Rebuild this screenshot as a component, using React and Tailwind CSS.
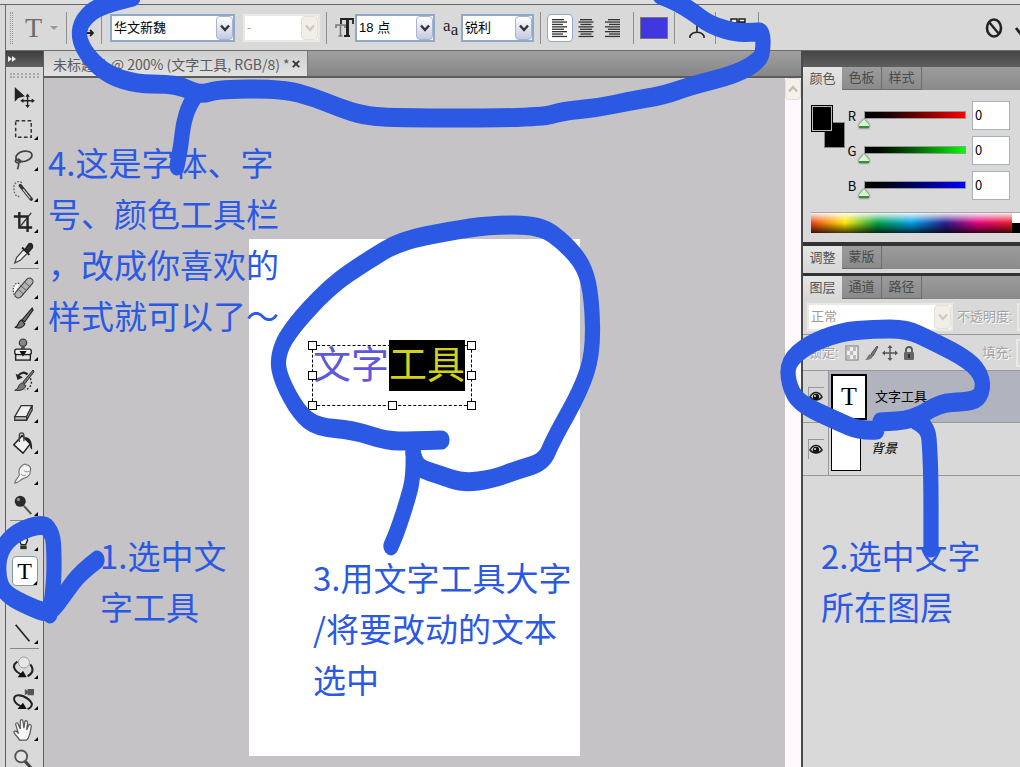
import { useState } from "react";

// toolbox drawings, all on a 24 x 24 grid
const toolIcons = {
  move: (
    <>
      <path d="M3 0v16l4-4 7-2z" fill="#222" />
      <path d="M17 9v12M11 15h12" stroke="#222" strokeWidth="1.5" />
      <path d="M17 7l-2.500 3.500h5zM17 23l-2.500-3.500h5zM9 15l3.500-2.500v5zM25 15l-3.500-2.500v5z" fill="#222" />
    </>
  ),
  marquee: <rect x="4" y="3" width="17" height="18" fill="none" stroke="#333" strokeWidth="1.6" strokeDasharray="4 2.5" />,
  lasso: (
    <>
      <ellipse cx="13" cy="8" rx="9" ry="5.500" fill="none" stroke="#444" strokeWidth="1.9" transform="rotate(-14 13 8)" />
      <path d="M5 11c-3 2 0 5 3 4s1-4-2-4M7 15c1 2 0 4-1 7" fill="none" stroke="#444" strokeWidth="1.8" />
    </>
  ),
  wand: (
    <>
      <path d="M11 3c-5-3-9 0-9 5s1 10 6 10" fill="none" stroke="#666" strokeWidth="1.4" strokeDasharray="2 1.5" />
      <path d="M9 6l12 15" stroke="#333" strokeWidth="3.8" strokeLinecap="round" />
      <path d="M12 10l8 10" stroke="#ddd" strokeWidth="1.2" />
    </>
  ),
  crop: (
    <>
      <path d="M8 1v17h14M2 6h15v17" fill="none" stroke="#222" strokeWidth="2.6" />
      <path d="M8 18L21 2" stroke="#333" strokeWidth="1.4" />
    </>
  ),
  eyedropper: (
    <>
      <path d="M3 23l2-6 8-9 4 4-8 8z" fill="#eee" stroke="#444" strokeWidth="1.4" />
      <path d="M11 6l8 8M14 9l4-6c2-3 5 0 4 3l-5 6z" stroke="#222" strokeWidth="2" fill="#333" />
    </>
  ),
  heal: (
    <>
      <path d="M8 7c-7-1-8 7-5 14" fill="#fff" stroke="#444" strokeWidth="1.4" strokeDasharray="1.500 1.500" />
      <path d="M7 19L19 5" stroke="#444" strokeWidth="9" strokeLinecap="round" />
      <path d="M7 19L19 5" stroke="#b4b4b4" strokeWidth="6.500" strokeLinecap="round" />
      <path d="M6 13l7 6M9 9l7 6M13 5l7 6" stroke="#555" strokeWidth="1" />
    </>
  ),
  brush: (
    <>
      <path d="M11 13L22 0l1 2-9 13z" fill="#777" stroke="#222" strokeWidth="1.3" />
      <path d="M3 21c4 0 3-6 7-8l4 4c-1 4-6 6-11 4z" fill="#777" stroke="#222" strokeWidth="1.3" />
    </>
  ),
  stamp: (
    <>
      <circle cx="12" cy="4" r="4" fill="#888" stroke="#333" strokeWidth="1.3" />
      <path d="M10 8h4v4h-4z" fill="#555" />
      <rect x="3" y="11" width="18" height="6" rx="2" fill="#eee" stroke="#222" strokeWidth="1.5" />
      <rect x="4" y="17" width="16" height="6" fill="#e2e2e2" stroke="#222" strokeWidth="1.5" />
      <path d="M8 13h8l-4 6z" fill="#111" />
    </>
  ),
  history: (
    <>
      <path d="M12 13L23 0l1 2-10 13z" fill="#777" stroke="#222" />
      <path d="M3 22c4 0 3-6 8-8l4 3c-1 5-7 6-12 5z" fill="#777" stroke="#222" />
      <path d="M7 6c3-4 7-4 10-1" fill="none" stroke="#222" strokeWidth="2.2" />
      <path d="M4 4l2 7 6-3z" fill="#222" />
      <path d="M20 9c3 6 0 11-6 13" fill="none" stroke="#222" strokeWidth="1.6" strokeDasharray="2 2" />
    </>
  ),
  eraser: (
    <>
      <path d="M3 17L10 5h12l-6 12z" fill="#eee" stroke="#333" strokeWidth="1.4" />
      <path d="M3 17h13v4H3zM16 17l6-12v5l-6 11z" fill="#bbb" stroke="#333" strokeWidth="1.4" />
    </>
  ),
  bucket: (
    <>
      <path d="M2 14l9-10 9 9-8 10z" fill="#f2f2f2" stroke="#222" strokeWidth="1.6" />
      <path d="M13 6c6-1 9 3 9 13-3-1-2-7-5-9z" fill="#222" />
      <path d="M8 11V4c0-4 5-4 5 0v6" fill="none" stroke="#444" strokeWidth="1.5" />
    </>
  ),
  smudge: (
    <>
      <path
        d="M3 22c0-3 4-6 5-9-1-4 0-8 3-10 2-2 4-2 5-1 4 0 5 4 4 7 0 5-4 7-8 8-3 1-5 5-9 5z"
        fill="#f4f4f4"
        stroke="#777"
        strokeWidth="1.3"
      />
      <path d="M10 12c1 2 3 2 5 1M13 8c1 2 3 2 6 1" fill="none" stroke="#888" />
    </>
  ),
  dodge: (
    <>
      <path d="M13 13l8 9" stroke="#555" strokeWidth="2.2" />
      <circle cx="9" cy="8" r="6" fill="#2a2a2a" />
      <circle cx="7" cy="6" r="1.800" fill="#888" />
    </>
  ),
  pen: (
    <>
      <path d="M12 1l-4 11 2 5h5l2-5z" fill="#eee" stroke="#222" strokeWidth="1.5" />
      <path d="M12 3v9" stroke="#222" strokeWidth="1.2" />
      <path d="M9 18h7v4H9z" fill="#333" />
    </>
  ),
  path: <path d="M8 2v17l4-4 6 0z" fill="#222" />,
  line: <path d="M4 3l15 18" stroke="#222" strokeWidth="1.8" />,
  rotate3d: (
    <>
      <path d="M6 5C-1 9 2 16 12 20M20 8c4 5 3 10-3 13" fill="none" stroke="#222" strokeWidth="2.2" />
      <path d="M6 22l10 0-4-7z" fill="#111" />
      <circle cx="13" cy="6" r="6" fill="#e6e6e6" stroke="#999" />
    </>
  ),
  orbit3d: (
    <>
      <path d="M13 21C1 18-1 8 7 8c7 0 17 7 14 12-1 2-2 2-4 3" fill="none" stroke="#222" strokeWidth="2.2" />
      <path d="M6 23l10 0-4-7z" fill="#111" />
      <path d="M14 1l3 2V1h7v7h-7V6l-3 2z" fill="#555" />
    </>
  ),
  hand: (
    <path
      d="M8 23c-1-4-7-7-6-9 2-2 4 0 5 2L4 6c0-2 2-3 3 0l2 5V3c0-3 3-3 3 0l1 7 1-7c1-2 3-1 3 1l-1 8 2-5c1-2 3-1 3 1-1 5-1 11-5 15z"
      fill="#f8f8f8"
      stroke="#555"
      strokeWidth="1.3"
    />
  ),
  zoom: (
    <>
      <path d="M14 12l8 9" stroke="#444" strokeWidth="3.4" />
      <circle cx="10" cy="7" r="6.500" fill="#e4e4e4" stroke="#555" strokeWidth="2" />
    </>
  ),
};

const toolGroups = [
  ["move", "marquee", "lasso", "wand", "crop", "eyedropper"],
  ["heal", "brush", "stamp", "history", "eraser", "bucket", "smudge", "dodge"],
  ["pen", "text", "path", "line"],
  ["rotate3d", "orbit3d", "hand", "zoom"],
];

// freehand marker strokes
const strokes = [
  [[133, -3], [100, 5], [82, 20], [78, 37], [88, 57], [108, 75], [137, 84], [167, 84], [184, 87], [200, 95], [220, 89], [283, 89], [313, 97], [340, 108], [362, 115], [390, 118], [540, 118], [563, 111], [597, 108], [630, 101], [665, 95], [690, 86], [737, 74], [760, 60], [763, 50], [763, 32], [755, 32], [737, 33], [710, 25], [693, 12], [677, 2], [660, -5]],
  [[197, 93], [189, 105], [183, 125], [181, 145], [177, 166]],
  [[877, 430], [860, 431], [837, 421], [798, 403], [788, 382], [788, 362], [807, 345], [840, 332], [873, 329], [907, 329], [930, 340], [960, 355], [977, 368], [984, 384], [979, 399], [963, 402], [940, 403], [913, 420], [880, 422]],
  [[915, 420], [928, 426], [930, 452], [931, 485], [931, 548]],
  [[97, 560], [80, 573], [66, 592], [50, 614], [30, 607], [5, 594], [-2, 577], [0, 550], [16, 532], [44, 523], [53, 535], [54, 553], [54, 580], [50, 614]],
  [[442, 440], [410, 441], [387, 441], [353, 430], [317, 427], [299, 413], [281, 380], [277, 358], [288, 332], [330, 286], [367, 261], [400, 241], [450, 231], [490, 225], [540, 225], [565, 243], [585, 267], [592, 300], [593, 353], [581, 390], [553, 440], [544, 462], [517, 470], [493, 479], [463, 483], [440, 475], [418, 468], [413, 453]],
  [[413, 445], [414, 475], [407, 502], [397, 532], [391, 546]],
];

// the marker tip is an upright oval, so x is drawn in a squeezed space
const TIP = 0.8;

// smooth curve through the midpoints
function strokePath(points) {
  const pts = points.map(([x, y]) => [x / TIP, y]);
  let d = `M${pts[0][0]} ${pts[0][1]}`;
  for (let i = 1; i < pts.length - 1; i++) {
    const [x, y] = pts[i];
    const [nx, ny] = pts[i + 1];
    d += `Q${x} ${y} ${(x + nx) / 2} ${(y + ny) / 2}`;
  }
  const last = pts[pts.length - 1];
  return `${d}L${last[0]} ${last[1]}`;
}

const notes = [
  { className: "left-[48px] top-[137px]", lines: ["4.这是字体、字", "号、颜色工具栏", "，改成你喜欢的", "样式就可以了～"] },
  { className: "left-[100px] top-[530px]", lines: ["1.选中文", "字工具"] },
  { className: "left-[313px] top-[552px]", lines: ["3.用文字工具大字", "/将要改动的文本", "选中"] },
  { className: "left-[821px] top-[530px]", lines: ["2.选中文字", "所在图层"] },
];

function Chevron({ className }) {
  return (
    <svg viewBox="0 0 12 12" className={className}>
      <path d="M2 3.500l4 4.500 4-4.500" fill="none" stroke="currentColor" strokeWidth="2.4" />
    </svg>
  );
}

function Dropdown({ label, value, className, disabled }) {
  return (
    <div
      className={`relative flex h-7 shrink-0 items-center border-2 bg-white ${
        disabled ? "border-[#ebe9e1] text-[#a39d8c]" : "border-[#8faac8] text-black"
      } ${className}`}
    >
      <select aria-label={label} disabled={disabled} className="h-full w-full appearance-none truncate bg-transparent pl-0.5 pr-5 text-[13px] leading-5 opacity-100 outline-none">
        <option>{value}</option>
      </select>
      <span
        className={`pointer-events-none absolute inset-y-0 right-0 flex w-[17px] items-center justify-center rounded-sm border ${
          disabled ? "border-[#e4e1d6] bg-[#f1efe8] text-[#cfccbf]" : "border-[#a9b3cf] bg-gradient-to-b from-white to-[#c5c9df] text-[#333]"
        }`}
      >
        <Chevron className="size-3" />
      </span>
    </div>
  );
}

function Divider({ className }) {
  return <span className={`h-8 w-px shrink-0 bg-[#8e8e8e] ${className}`} />;
}

function AlignIcon({ align }) {
  const widths = [12, 15, 11, 15, 12, 15, 11, 15];
  return (
    <svg viewBox="0 0 16 20" className="h-5 w-4">
      {widths.map((w, i) => {
        const x = align === "left" ? 0 : align === "right" ? 16 - w : (16 - w) / 2;
        return <rect key={i} x={x} y={1 + i * 2.4} width={w} height="1.3" fill="#333" />;
      })}
    </svg>
  );
}

function OptionsBar() {
  return (
    <header className="flex h-[51px] shrink-0 flex-col bg-[#d9d9d9]">
      <div className="h-[5px] shrink-0 border-b border-[#666] bg-[#dedede]" />
      <div className="ml-[5px] flex flex-1 items-center border-b border-l border-[#6c6c6c] pl-1">
        <span className="h-8 w-[3px] shrink-0 border-x border-dotted border-[#999]" />
        <button aria-label="文字工具预设" className="ml-3 flex shrink-0 items-center gap-2 font-['Liberation_Serif'] text-[28px] leading-8 text-[#6d6d6d]">
          T
          <span className="border-x-4 border-t-4 border-x-transparent border-t-[#999]" />
        </button>
        <Divider className="ml-2" />
        <button aria-label="更改文本方向" className="ml-2 shrink-0">
          <svg viewBox="0 0 20 20" className="size-5">
            <path d="M2 13L7 3l5 10M4 10h6" fill="none" stroke="#222" strokeWidth="1.8" />
            <path d="M10 15h7m-2-3l3 3-3 3" fill="none" stroke="#222" strokeWidth="1.8" />
          </svg>
        </button>
        <Divider className="ml-1.5" />
        <Dropdown label="字体" value="华文新魏" className="ml-2 w-[125px]" />
        <Dropdown label="字体样式" value="-" className="ml-2 w-[77px]" disabled />
        <Divider className="ml-1.5" />
        <svg viewBox="0 0 20 24" className="ml-2 h-6 w-5 shrink-0">
          <path d="M1 12V9h9v3M5.500 9v11M3.500 20h4" fill="none" stroke="#777" strokeWidth="1.6" />
          <path d="M6 8V3h12v5M12 3v17M9 20h6" fill="none" stroke="#222" strokeWidth="1.8" />
          <path d="M11 3h3v17h-3z" fill="#222" />
        </svg>
        <Dropdown label="字号" value="18 点" className="w-[80px]" />
        <span className="ml-2 flex w-4 shrink-0 items-center font-['Liberation_Serif'] text-[17px] leading-5 text-[#222]">
          <span className="pb-1">a</span>
          <span className="pt-1">a</span>
        </span>
        <Dropdown label="消除锯齿" value="锐利" className="ml-0.5 w-[73px]" />
        <Divider className="ml-1.5" />
        <div className="ml-1.5 flex shrink-0 items-center">
          <button aria-label="左对齐" className="flex h-7 w-[26px] items-center justify-center rounded border border-[#8faac8] bg-white">
            <AlignIcon align="left" />
          </button>
          <button aria-label="居中对齐" className="flex h-7 w-[26px] items-center justify-center">
            <AlignIcon align="center" />
          </button>
          <button aria-label="右对齐" className="flex h-7 w-[26px] items-center justify-center">
            <AlignIcon align="right" />
          </button>
        </div>
        <Divider className="ml-2" />
        <button aria-label="文本颜色" className="ml-1.5 h-[22px] w-7 shrink-0 border border-[#777] bg-[#4137e0]" />
        <Divider className="ml-1.5" />
        <button aria-label="变形文字" className="ml-3.5 shrink-0">
          <svg viewBox="0 0 16 24" className="h-6 w-4">
            <path d="M4 3h8M8 3v13M1 22v-2c3-5 11-5 14 0v2" fill="none" stroke="#222" strokeWidth="1.6" />
          </svg>
        </button>
        <Divider className="ml-2.5" />
        <button aria-label="字符面板" className="ml-3.5 shrink-0">
          <svg viewBox="0 0 16 20" className="h-5 w-4">
            <path d="M1 17V1h6v3h8v13zM1 5h14M9 4V1h6v3" fill="#eee" stroke="#222" strokeWidth="1.5" />
          </svg>
        </button>
        <Divider className="ml-3" />
        <button aria-label="取消" className="ml-auto shrink-0">
          <svg viewBox="0 0 20 24" className="h-6 w-5">
            <ellipse cx="10" cy="12" rx="7" ry="8.500" fill="#ddd" stroke="#222" strokeWidth="2.6" />
            <path d="M5 6l10 12" stroke="#222" strokeWidth="2.4" />
          </svg>
        </button>
        <button aria-label="提交" className="ml-2.5 w-1.5 shrink-0 overflow-hidden">
          <svg viewBox="0 0 16 20" className="h-5 w-4">
            <path d="M2 10l4 5 9-12" fill="none" stroke="#222" strokeWidth="2.800" />
          </svg>
        </button>
      </div>
    </header>
  );
}

function Toolbox() {
  return (
    <nav className="ml-[5px] flex w-[39px] shrink-0 flex-col border-x border-[#5e5e5e] bg-[#d9d9d9]">
      <div className="flex h-4 shrink-0 items-center bg-gradient-to-b from-[#3e3e3e] to-[#606060] pl-0.5">
        <svg viewBox="0 0 8 6" className="h-1.5 w-2">
          <path d="M0 0l4 3-4 3zM4 0l4 3-4 3z" fill="#eee" />
        </svg>
      </div>
      <div className="mx-1 mb-1 mt-[6px] h-[5px] shrink-0 border-y-2 border-dotted border-[#aaa]" />
      {toolGroups.map((group, g) => (
        <div key={g} className="shrink-0">
          {g > 0 && <div className="mx-1 h-1 border-t border-[#888]" />}
          {group.map((tool) => (
            <button key={tool} aria-label={tool} className="flex h-[31px] w-full items-center justify-center">
              {tool === "text" ? (
                <span className="relative flex h-[30px] w-[26px] items-center justify-center rounded border border-[#8399ad] bg-white font-['Liberation_Serif'] text-[24px] leading-none text-black">
                  T
                  <span className="absolute bottom-0 right-0 border-b-4 border-l-4 border-b-black border-l-transparent" />
                </span>
              ) : (
                <span className="relative flex h-full w-[26px] items-center">
                  <svg viewBox="0 0 24 24" className="h-[22px] w-[22px] overflow-visible">
                    {toolIcons[tool]}
                  </svg>
                  {tool !== "move" && tool !== "zoom" && (
                    <span className="absolute bottom-1 right-0 border-b-4 border-l-4 border-b-black border-l-transparent" />
                  )}
                </span>
              )}
            </button>
          ))}
        </div>
      ))}
    </nav>
  );
}

function Handle({ className }) {
  return <span className={`absolute size-[9px] border border-black bg-white ${className}`} />;
}

function DocumentArea() {
  return (
    <main className="flex min-w-0 flex-1 flex-col">
      <div className="flex h-[27px] shrink-0 border-b-2 border-[#5c5c5c] bg-gradient-to-b from-[#a0a0a0] to-[#868686]">
        <div className="flex w-[264px] items-center justify-between whitespace-nowrap border-r border-[#777] bg-gradient-to-b from-[#cfcfcf] to-[#e2e2e2] pl-[9px] pr-[7px] font-['Noto_Sans_CJK_SC',sans-serif] text-[14px] leading-5 text-[#5a5a5a]">
          <span>未标题-1 @ 200% (文字工具, RGB/8) *</span>
          <button aria-label="关闭">
            <svg viewBox="0 0 10 10" className="size-2">
              <path d="M1 1l8 8M9 1L1 9" stroke="#333" strokeWidth="2.2" />
            </svg>
          </button>
        </div>
      </div>
      <div className="flex min-h-0 flex-1">
        <div className="flex flex-1 items-end justify-center bg-[#c5c3c6] pb-[11px]">
          <div className="h-[517px] w-[331px] bg-white pl-[63px] pt-[106px]">
            <div className="relative h-[61px] w-[160px] border border-dashed border-black">
              <div className="-mt-[6px] flex whitespace-nowrap text-[38px] leading-[51px]">
                <span className="text-[#5f57dc]">文字</span>
                <span className="bg-black text-[#d2d21e]">工具</span>
              </div>
              <Handle className="-left-[5px] -top-[5px]" />
              <Handle className="-right-[5px] -top-[5px]" />
              <Handle className="-left-[5px] top-[25px]" />
              <Handle className="-right-[5px] top-[25px]" />
              <Handle className="-bottom-[5px] -left-[5px]" />
              <Handle className="-bottom-[5px] left-[75px]" />
              <Handle className="-bottom-[5px] -right-[5px]" />
            </div>
          </div>
        </div>
        <div className="w-4 shrink-0 bg-[#fdf9fd]">
          <button aria-label="向上滚动" className="flex h-[22px] w-full items-center justify-center rounded-sm border border-[#e2dfd3] bg-[#f3f1ea] text-[#c4c1b4]">
            <Chevron className="size-3 rotate-180" />
          </button>
        </div>
      </div>
    </main>
  );
}

function PanelTabs({ tabs }) {
  return (
    <div className="flex h-[23px] shrink-0 bg-gradient-to-b from-[#9c9c9c] to-[#8a8a8a] text-[13px] leading-[22px]">
      {tabs.map((tab, i) => (
        <button
          key={tab}
          className={i === 0 ? "w-[39px] bg-gradient-to-b from-[#e6e6e6] to-[#d8d8d8] text-[#555]" : "w-10 border-b border-r border-[#6d6d6d] text-[#4a4a4a]"}
        >
          {tab}
        </button>
      ))}
    </div>
  );
}

const channels = [
  { name: "R", bar: "bg-gradient-to-r from-black to-[#f00]" },
  { name: "G", bar: "bg-gradient-to-r from-black to-[#0f0]" },
  { name: "B", bar: "bg-gradient-to-r from-black to-[#00f]" },
];

function ColorPanel() {
  const [rgb, setRgb] = useState({ R: 0, G: 0, B: 0 });

  const handleChange = (name, value) => {
    setRgb({ ...rgb, [name]: Math.min(255, Number(value) || 0) });
  };

  return (
    <section>
      <PanelTabs tabs={["颜色", "色板", "样式"]} />
      <div className="flex flex-col pl-2 pt-[11px]">
        <div className="flex">
          <div className="relative mt-1 h-[43px] w-[34px] shrink-0">
            <span className="absolute bottom-0 right-0 h-[26px] w-[21px] border border-[#888] bg-black" />
            <span className="absolute left-0 top-0 h-[27px] w-[22px] border border-black bg-black ring-1 ring-inset ring-[#bbb]" />
          </div>
          <div className="flex flex-1 flex-col gap-[6px] pr-2.5">
            {channels.map(({ name, bar }) => (
              <div key={name} className="flex h-[29px] items-center">
                <label htmlFor={`num-${name}`} className="w-[14px] text-center font-['Noto_Sans_CJK_SC',sans-serif] text-[13px] leading-4 text-black">
                  {name}
                </label>
                <div className="flex-1 pt-2">
                  <div className={`ml-[5px] h-2 border border-[#999] ${bar}`} />
                  <input
                    type="range"
                    min="0"
                    max="255"
                    aria-label={name}
                    value={rgb[name]}
                    onChange={(e) => handleChange(name, e.target.value)}
                    className="block h-[9px] w-full appearance-none bg-transparent drop-shadow-[0_0_1px_#0b4a0b] [&::-webkit-slider-thumb]:h-[9px] [&::-webkit-slider-thumb]:w-[10px] [&::-webkit-slider-thumb]:appearance-none [&::-webkit-slider-thumb]:border-b-2 [&::-webkit-slider-thumb]:border-[#3d8a3d] [&::-webkit-slider-thumb]:bg-[#d9f5d2] [&::-webkit-slider-thumb]:[clip-path:polygon(50%_0,100%_65%,100%_100%,0_100%,0_65%)]"
                  />
                </div>
                <input
                  id={`num-${name}`}
                  value={rgb[name]}
                  onChange={(e) => handleChange(name, e.target.value)}
                  className="ml-1.5 h-[29px] w-[38px] border border-[#a9b0b8] bg-white pb-0.5 pl-0.5 font-['Noto_Sans_CJK_SC',sans-serif] text-[13px] text-black outline-none"
                />
              </div>
            ))}
          </div>
        </div>
        <div className="mb-[9px] mt-3 flex h-[21px] border-t border-[#aaa]">
          <div className="flex-1 bg-[linear-gradient(to_bottom,rgba(255,255,255,0.9),transparent_50%,rgba(0,0,0,0.75)),linear-gradient(to_right,#e8401c,#ffe600_17%,#00a046_33%,#00a0e8_50%,#2a1e8c_67%,#e6007e_83%,#e81c24)]" />
          <div className="w-2 bg-[linear-gradient(to_bottom,white_50%,black_50%)]" />
        </div>
      </div>
    </section>
  );
}

function Eye() {
  return (
    <button aria-label="图层可见性" className="flex h-5 w-4 items-center justify-center border-l border-t border-[#999]">
      <svg viewBox="0 0 14 12" className="h-3 w-3.5">
        <path d="M1 6c3-6 9-6 12 0-3 4-9 4-12 0z" fill="#ddd" stroke="#222" strokeWidth="1.6" />
        <circle cx="7" cy="6" r="3.200" fill="#111" />
        <circle cx="6" cy="5" r="0.900" fill="#fff" />
      </svg>
    </button>
  );
}

function LayersPanel() {
  return (
    <section className="flex flex-1 flex-col">
      <PanelTabs tabs={["图层", "通道", "路径"]} />
      <div className="flex h-9 items-center border-b border-[#999] pl-1 text-[13px] text-[#a2a2a2]">
        <Dropdown label="混合模式" value="正常" className="w-[146px]" disabled />
        <label htmlFor="opacity" className="ml-1 shrink-0 whitespace-nowrap [text-shadow:1px_1px_0_#fff]">不透明度:</label>
        <input id="opacity" disabled className="ml-1 h-7 min-w-0 flex-1 border-2 border-r-0 border-[#ebe9e1]" />
      </div>
      <div className="flex h-9 items-center border-b border-[#999] pl-1.5 text-[13px] text-[#a2a2a2]">
        <span className="w-[35px] shrink-0 [text-shadow:1px_1px_0_#fff]">锁定:</span>
        <div className="flex items-center gap-[3px]">
          <button aria-label="锁定透明像素">
            <svg viewBox="0 0 16 16" className="size-4">
              <rect x="2" y="1" width="12" height="14" fill="#eee" stroke="#777" />
              <path d="M3 2h3v4H3zM9 2h3v4H9zM6 6h3v4H6zM3 10h3v4H3zM9 10h3v4H9z" fill="#bbb" />
            </svg>
          </button>
          <button aria-label="锁定图像像素">
            <svg viewBox="0 0 16 16" className="size-4">
              <path d="M8 9l6-8 1 1-5 9z" fill="#777" stroke="#555" />
              <path d="M2 15c2-1 2-4 5-6l3 2c-1 3-4 4-8 4z" fill="#777" />
            </svg>
          </button>
          <button aria-label="锁定位置">
            <svg viewBox="0 0 16 16" className="size-4">
              <path d="M8 2v12M2 8h12" stroke="#555" strokeWidth="1.4" />
              <path d="M8 0L5.500 3h5zM8 16l-2.500-3h5zM0 8l3-2.500v5zM16 8l-3-2.500v5z" fill="#555" />
            </svg>
          </button>
          <button aria-label="锁定全部">
            <svg viewBox="0 0 16 16" className="size-4">
              <path d="M5 8V5c0-4 6-4 6 0v3" fill="none" stroke="#555" strokeWidth="1.8" />
              <rect x="3" y="7" width="10" height="8" rx="1" fill="#666" />
              <path d="M8 9v4" stroke="#222" strokeWidth="1.5" />
            </svg>
          </button>
        </div>
        <label htmlFor="fill" className="ml-auto shrink-0 [text-shadow:1px_1px_0_#fff]">填充:</label>
        <input id="fill" disabled className="ml-1 h-7 w-1 border-2 border-r-0 border-[#ebe9e1]" />
      </div>
      <div className="flex h-[52px] items-center border-b border-[#999] bg-[#b1b3be] text-[13px] text-black">
        <div className="flex h-full w-[26px] items-center justify-center border-r border-[#999] bg-[#d6d6d6]">
          <Eye />
        </div>
        <span className="ml-0.5 flex h-[46px] w-9 items-center justify-center border-2 border-black bg-white font-['Liberation_Serif'] text-[26px] leading-none">T</span>
        <span className="ml-2">文字工具</span>
      </div>
      <div className="flex h-[53px] items-center border-b border-[#999] text-[13px] text-black">
        <div className="flex h-full w-[26px] items-center justify-center border-r border-[#999]">
          <Eye />
        </div>
        <span className="mb-1 ml-0.5 h-[48px] w-[30px] border border-black bg-white" />
        <span className="ml-2.5 italic">背景</span>
      </div>
    </section>
  );
}

export default function App() {
  return (
    <div className="relative flex h-screen w-full flex-col overflow-hidden bg-[#d9d9d9] font-['Liberation_Sans','Noto_Sans_CJK_SC',sans-serif]">
      <OptionsBar />
      <div className="flex min-h-0 flex-1">
        <Toolbox />
        <DocumentArea />
        <aside className="flex w-[219px] shrink-0 flex-col border-l-2 border-[#4a4a4a] bg-[#d9d9d9]">
          <div className="h-4 shrink-0 bg-gradient-to-b from-[#444] to-[#5f5f5f]" />
          <ColorPanel />
          <div className="h-1 shrink-0 bg-[#333]" />
          <PanelTabs tabs={["调整", "蒙版"]} />
          <div className="h-[7px] shrink-0 border-b-[3px] border-[#333]" />
          <LayersPanel />
        </aside>
      </div>

      {/* marker strokes and notes on top of everything */}
      <svg width="1020" height="767" className="pointer-events-none absolute left-0 top-0">
        <g transform={`scale(${TIP} 1)`}>
          {strokes.map((points, i) => (
            <path key={i} d={strokePath(points)} fill="none" stroke="#2b59e3" strokeWidth="19" strokeLinecap="round" strokeLinejoin="round" />
          ))}
        </g>
      </svg>
      {notes.map((note) => (
        <p key={note.lines[0]} className={`pointer-events-none absolute whitespace-nowrap font-['Noto_Sans_CJK_SC',sans-serif] text-[33px] leading-[51px] text-[#2b59e3] ${note.className}`}>
          {note.lines.map((line) => (
            <span key={line} className="block">
              {line}
            </span>
          ))}
        </p>
      ))}
    </div>
  );
}
